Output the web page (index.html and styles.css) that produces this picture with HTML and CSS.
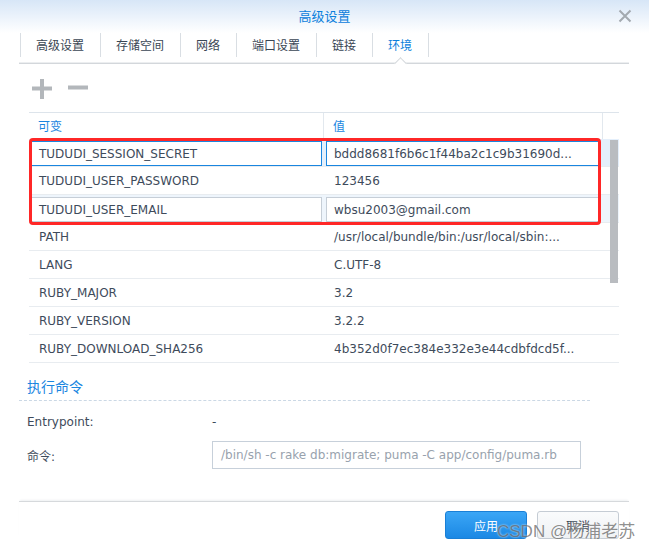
FILE: index.html
```html
<!DOCTYPE html>
<html lang="zh-CN">
<head>
<meta charset="utf-8">
<title>高级设置</title>
<link rel="stylesheet" href="styles.css">
</head>
<body>
<div class="dialog">
  <header class="titlebar">
    <span class="title">高级设置</span>
    <span class="close"><svg width="14" height="14" viewBox="0 0 14 14"><path d="M1.5 1.5 L12.5 12.5 M12.5 1.5 L1.5 12.5" stroke="#a3a9af" stroke-width="2" fill="none"/></svg></span>
  </header>
  <nav class="tabs">
    <span class="tab">高级设置</span>
    <span class="tab">存储空间</span>
    <span class="tab">网络</span>
    <span class="tab">端口设置</span>
    <span class="tab">链接</span>
    <span class="tab active">环境</span>
  </nav>
  <div class="toolbar">
    <svg class="tool" width="20" height="20" viewBox="0 0 20 20"><path d="M0 9.5 H20 M10 0 V20" stroke="#b3b7bb" stroke-width="4" fill="none"/></svg>
    <svg class="tool" width="20" height="20" viewBox="0 0 20 20"><path d="M0 8.5 H20" stroke="#b3b7bb" stroke-width="4" fill="none"/></svg>
  </div>
  <div class="table">
    <div class="thead">
      <div class="th">可变</div>
      <div class="th">值</div>
      <div class="th last"></div>
    </div>
    <div class="tbody">
      <div class="tr selected">
        <div class="td edit"><div class="editor focus">TUDUDI_SESSION_SECRET</div></div>
        <div class="td edit right"><div class="editor focus">bddd8681f6b6c1f44ba2c1c9b31690d...</div></div>
        <div class="td gutter"></div>
      </div>
      <div class="tr">
        <div class="td">TUDUDI_USER_PASSWORD</div>
        <div class="td">123456</div>
        <div class="td gutter"></div>
      </div>
      <div class="tr hover">
        <div class="td edit"><div class="editor">TUDUDI_USER_EMAIL</div></div>
        <div class="td edit right"><div class="editor">wbsu2003@gmail.com</div></div>
        <div class="td gutter"></div>
      </div>
      <div class="tr">
        <div class="td">PATH</div>
        <div class="td">/usr/local/bundle/bin:/usr/local/sbin:...</div>
        <div class="td gutter"></div>
      </div>
      <div class="tr">
        <div class="td">LANG</div>
        <div class="td">C.UTF-8</div>
        <div class="td gutter"></div>
      </div>
      <div class="tr">
        <div class="td">RUBY_MAJOR</div>
        <div class="td">3.2</div>
        <div class="td gutter"></div>
      </div>
      <div class="tr">
        <div class="td">RUBY_VERSION</div>
        <div class="td">3.2.2</div>
        <div class="td gutter"></div>
      </div>
      <div class="tr">
        <div class="td">RUBY_DOWNLOAD_SHA256</div>
        <div class="td">4b352d0f7ec384e332e3e44cdbfdcd5f...</div>
        <div class="td gutter"></div>
      </div>
      <div class="scrollbar"></div>
      <div class="highlight"></div>
    </div>
  </div>
  <section class="cmd">
    <h2 class="cmd-title">执行命令</h2>
    <div class="form-row">
      <span class="label">Entrypoint:</span>
      <span class="value">-</span>
    </div>
    <div class="form-row">
      <span class="label">命令:</span>
      <div class="input">/bin/sh -c rake db:migrate; puma -C app/config/puma.rb</div>
    </div>
  </section>
  <footer class="footer">
    <button class="btn primary">应用</button>
    <button class="btn">取消</button>
  </footer>
  <div class="watermark">CSDN @杨浦老苏</div>
</div>
</body>
</html>
```

FILE: styles.css
```css
html, body {
  margin: 0;
  padding: 0;
  background: #fff;
}
body {
  width: 649px;
  height: 547px;
  overflow: hidden;
  font-family: "DejaVu Sans", "Noto Sans CJK SC", sans-serif;
  font-size: 12px;
  color: #3e4b5b;
}
.dialog {
  position: relative;
  width: 649px;
  height: 547px;
  background: #fff;
}
.titlebar {
  position: relative;
  height: 33px;
  display: flex;
  align-items: center;
  justify-content: center;
  background: linear-gradient(#d7e6f7, #ffffff);
}
.title {
  font-family: "Noto Sans CJK SC", sans-serif;
  font-size: 13px;
  color: #0b80dc;
  margin-top: -2px;
}
.close {
  position: absolute;
  right: 17px;
  top: 9px;
  width: 14px;
  height: 14px;
  display: flex;
}
.tabs {
  position: relative;
  display: flex;
  align-items: flex-start;
  margin: 0 20px 0 19px;
  height: 30px;
  border-bottom: 1px solid #d3d7db;
  box-shadow: 0 -1px 0 #eceef0 inset;
}
.tab {
  position: relative;
  height: 24px;
  line-height: 24px;
  padding: 0 16px 0 15px;
  border-right: 1px solid #d9dee3;
  font-family: "Noto Sans CJK SC", sans-serif;
  font-size: 12px;
  color: #3a4654;
}
.tab:first-child {
  border-left: 1px solid #d9dee3;
  margin-left: 1px;
}
.tab.active {
  color: #0b80dc;
}
.tab.active::after {
  content: "";
  position: absolute;
  left: 50%;
  bottom: -11px;
  width: 8px;
  height: 8px;
  margin-left: -5px;
  background: #fff;
  border-top: 1px solid #d3d7db;
  border-left: 1px solid #d3d7db;
  transform: rotate(45deg);
}
.toolbar {
  display: flex;
  gap: 16px;
  height: 48px;
  padding-left: 32px;
  padding-top: 15px;
  box-sizing: border-box;
}
.tool {
  display: block;
}
.table {
  margin-left: 29px;
  width: 590px;
}
.thead {
  display: grid;
  grid-template-columns: 295px 279px 16px;
  height: 27px;
  border-top: 1px solid #dde4eb;
  box-sizing: border-box;
}
.th {
  padding-left: 9px;
  line-height: 26px;
  font-family: "Noto Sans CJK SC", sans-serif;
  color: #1a86df;
  border-right: 1px solid #e2e8ee;
}
.th.last {
  border-right: none;
}
.tbody {
  position: relative;
}
.tr {
  display: grid;
  grid-template-columns: 295px 279px 16px;
  height: 28px;
  border-bottom: 1px solid #e8ecf0;
  box-sizing: border-box;
}
.tr.selected {
  background: #e4effb;
}
.tr.hover {
  background: #eef5fc;
}
.td {
  padding: 1px 0 0 10px;
  line-height: 27px;
  white-space: nowrap;
  overflow: hidden;
}
.td.edit {
  padding: 2px 2px 0 2px;
}
.td.edit.right {
  padding: 2px 3px 0 2px;
}
.editor {
  height: 25px;
  line-height: 24px;
  padding-left: 7px;
  border: 1px solid #c6ced7;
  background: #fff;
  box-sizing: border-box;
}
.editor.focus {
  border-color: #1a86df;
}
.gutter {
  padding: 0;
}
.scrollbar {
  position: absolute;
  left: 581px;
  top: 1px;
  width: 8px;
  height: 143px;
  background: #b9bcc0;
}
.highlight {
  position: absolute;
  left: 0;
  top: -1px;
  width: 572px;
  height: 87px;
  border: 3px solid #ff2727;
  border-radius: 4px;
  box-sizing: border-box;
}
.cmd {
  margin: 10px 0 0 19px;
  width: 571px;
}
.cmd-title {
  margin: 0;
  padding-left: 8px;
  height: 27px;
  line-height: 27px;
  font-family: "Noto Sans CJK SC", sans-serif;
  font-size: 14px;
  font-weight: normal;
  color: #1a86df;
  border-bottom: 1px dashed #cbd8e5;
}
.form-row {
  display: flex;
  align-items: center;
  height: 28px;
  padding-left: 8px;
  margin-top: 7px;
}
.form-row + .form-row {
  margin-top: 5px;
}
.label {
  width: 185px;
  font-family: "DejaVu Sans", "Noto Sans CJK SC", sans-serif;
}
.value {
  color: #3e4b5b;
}
.input {
  width: 369px;
  height: 28px;
  line-height: 26px;
  padding-left: 8px;
  border: 1px solid #c7d0da;
  box-sizing: border-box;
  color: #98a2ad;
  white-space: nowrap;
  overflow: hidden;
}
.footer {
  display: flex;
  justify-content: flex-end;
  gap: 10px;
  margin: 32px 20px 0 19px;
  padding: 9px 10px 0 0;
  border-top: 1px solid #d6d9dc;
  box-shadow: 0 -2px 2px -1px #eef0f2;
}
.btn {
  width: 82px;
  height: 28px;
  border: 1px solid #c5ccd4;
  border-radius: 3px;
  background: linear-gradient(#fafbfc, #eef1f4);
  font-family: "Noto Sans CJK SC", sans-serif;
  font-size: 12px;
  color: #3a4654;
  padding: 0;
}
.btn.primary {
  border-color: #1a7fd6;
  background: linear-gradient(#3ba6f6, #1b88e4);
  color: #fff;
}
.watermark {
  position: absolute;
  left: 497px;
  top: 517px;
  font-family: "Liberation Sans", "Noto Sans CJK SC", sans-serif;
  font-size: 17px;
  color: rgba(70, 70, 70, 0.62);
  text-shadow: 0 0 2px rgba(255, 255, 255, 0.9);
  white-space: nowrap;
}
```
